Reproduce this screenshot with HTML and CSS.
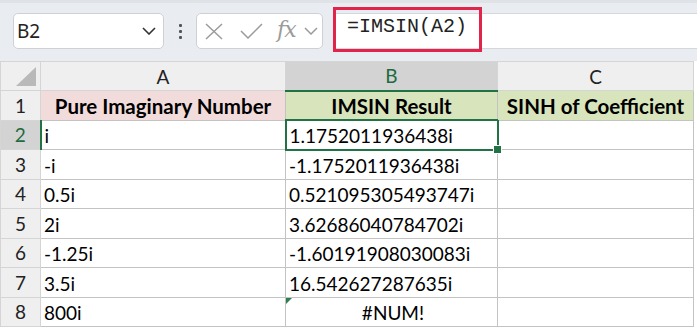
FILE: index.html
```html
<!DOCTYPE html>
<html lang="en">
<head>
  <meta charset="UTF-8">
  <title>IMSIN - Sheet</title>
  <link rel="stylesheet" href="styles.css">
</head>
<body>
  <div class="toolbar">
    <div class="namebox">
      <span>B2</span>
      <svg class="chev" width="14" height="8" viewBox="0 0 14 8"><path d="M1 1 L7 7 L13 1" fill="none" stroke="#333" stroke-width="1.6"/></svg>
    </div>
    <div class="dots"><i></i><i></i><i></i></div>
    <div class="fxbox">
      <svg class="x" width="18" height="17" viewBox="0 0 18 17"><path d="M1 1 L17 16 M17 1 L1 16" stroke="#9b9b9b" stroke-width="1.5" fill="none"/></svg>
      <svg class="ok" width="23" height="16" viewBox="0 0 23 16"><path d="M1 8 L8 15 L22 1" stroke="#9b9b9b" stroke-width="1.5" fill="none"/></svg>
      <span class="fx">fx</span>
      <svg width="14" height="8" viewBox="0 0 14 8"><path d="M1 1 L7 7 L13 1" fill="none" stroke="#9b9b9b" stroke-width="1.5"/></svg>
    </div>
    <div class="formula">
      <div class="highlight">=IMSIN(A2)</div>
    </div>
  </div>

  <table class="sheet">
    <colgroup>
      <col style="width:40px">
      <col style="width:245px">
      <col style="width:212px">
      <col style="width:196px">
    </colgroup>
    <tr class="colhead">
      <th class="corner"><svg width="20" height="19" viewBox="0 0 20 19"><path d="M20 0 L20 19 L0 19 Z" fill="#b9b9b9"/></svg></th>
      <th>A</th>
      <th class="sel">B</th>
      <th>C</th>
    </tr>
    <tr>
      <th>1</th>
      <td class="title pink">Pure Imaginary Number</td>
      <td class="title green">IMSIN Result</td>
      <td class="title green">SINH of Coefficient</td>
    </tr>
    <tr>
      <th class="sel">2</th>
      <td>i</td>
      <td class="active">1.1752011936438i<span class="handle"></span></td>
      <td></td>
    </tr>
    <tr><th>3</th><td>-i</td><td>-1.1752011936438i</td><td></td></tr>
    <tr><th>4</th><td>0.5i</td><td>0.521095305493747i</td><td></td></tr>
    <tr><th>5</th><td>2i</td><td>3.62686040784702i</td><td></td></tr>
    <tr><th>6</th><td>-1.25i</td><td>-1.60191908030083i</td><td></td></tr>
    <tr><th>7</th><td>3.5i</td><td>16.542627287635i</td><td></td></tr>
    <tr><th>8</th><td>800i</td><td class="err">#NUM!</td><td></td></tr>
  </table>
</body>
</html>
```

FILE: styles.css
```css
body {
  margin: 0;
  background: #fff;
  font-family: Lato, "Liberation Sans", sans-serif;
  color: #000;
}

.toolbar {
  display: flex;
  align-items: flex-start;
  height: 61px;
  box-sizing: border-box;
  padding: 10px 0 0 13px;
  background: #e9edf2;
  border-top: 3px solid #dfe3e8;
}

.namebox,
.fxbox {
  height: 36px;
  box-sizing: border-box;
  background: #fff;
  border: 1px solid #cdd1d6;
  border-radius: 5px;
  display: flex;
  align-items: center;
}

.namebox {
  width: 151px;
  padding: 0 7px 0 3px;
  justify-content: space-between;
  font-family: "Noto Sans", sans-serif;
  font-size: 19px;
  color: #222;
}

.dots {
  width: 32px;
  height: 36px;
  display: flex;
  flex-direction: column;
  align-items: center;
  justify-content: center;
  gap: 3px;
}

.dots i {
  width: 3px;
  height: 3px;
  background: #555;
  border-radius: 1px;
}

.fxbox {
  width: 127px;
  padding: 0 0 0 8px;
}

.fxbox .ok {
  margin-left: 17px;
}

.fx {
  font-family: "DejaVu Serif", "Liberation Serif", serif;
  font-style: italic;
  font-size: 22px;
  color: #9b9b9b;
  letter-spacing: -1px;
  margin: -4px 8px 0 14px;
}

.formula {
  flex: 1;
  height: 36px;
  box-sizing: border-box;
  margin-left: 10px;
  background: #fff;
  border: 1px solid #d4d8dd;
  border-right: none;
  display: flex;
}

.highlight {
  align-self: flex-start;
  height: 45px;
  width: 149px;
  box-sizing: border-box;
  margin: -7px 0 0 -1px;
  border: 3px solid #e0244b;
  padding: 5px 0 0 11px;
  font-family: "Liberation Mono", monospace;
  font-size: 20px;
  color: #222;
}

.sheet {
  border-collapse: collapse;
  table-layout: fixed;
  width: 693px;
}

.sheet th {
  background: #efefef;
  font-weight: normal;
  font-size: 19px;
  color: #222;
  border: 1px solid #d5d5d5;
  padding: 0;
  text-align: center;
}

.sheet tr {
  height: 29.5px;
}

.sheet tr.colhead {
  height: 29px;
}

.sheet .corner {
  text-align: right;
  vertical-align: bottom;
  padding: 0 4px 4px 0;
  line-height: 0;
}

.sheet th.sel {
  background: #d3d3d3;
  color: #1d6b3e;
}

.colhead th.sel {
  border-bottom: 2px solid #217346;
}

tr th.sel:first-child {
  border-right: 2px solid #217346;
}

.sheet td {
  border: 1px solid #c3c3c3;
  padding: 2px 0 0 3px;
  font-size: 19px;
  white-space: nowrap;
  overflow: hidden;
  position: relative;
}

.sheet td.title {
  font-weight: bold;
  font-size: 20.5px;
  text-align: center;
  padding: 1px 0 0;
}

.pink {
  background: #f2dcdb;
}

.green {
  background: #d8e4bc;
}

.sheet td.active {
  border: 2px solid #217346;
  overflow: visible;
}

.handle {
  position: absolute;
  right: -5px;
  bottom: -5px;
  width: 7px;
  height: 7px;
  background: #217346;
  border: 1px solid #fff;
}

.sheet td.err {
  text-align: center;
}

.err::before {
  content: "";
  position: absolute;
  left: 0;
  top: 0;
  border-top: 6px solid #2e7d4f;
  border-right: 6px solid transparent;
}
```
